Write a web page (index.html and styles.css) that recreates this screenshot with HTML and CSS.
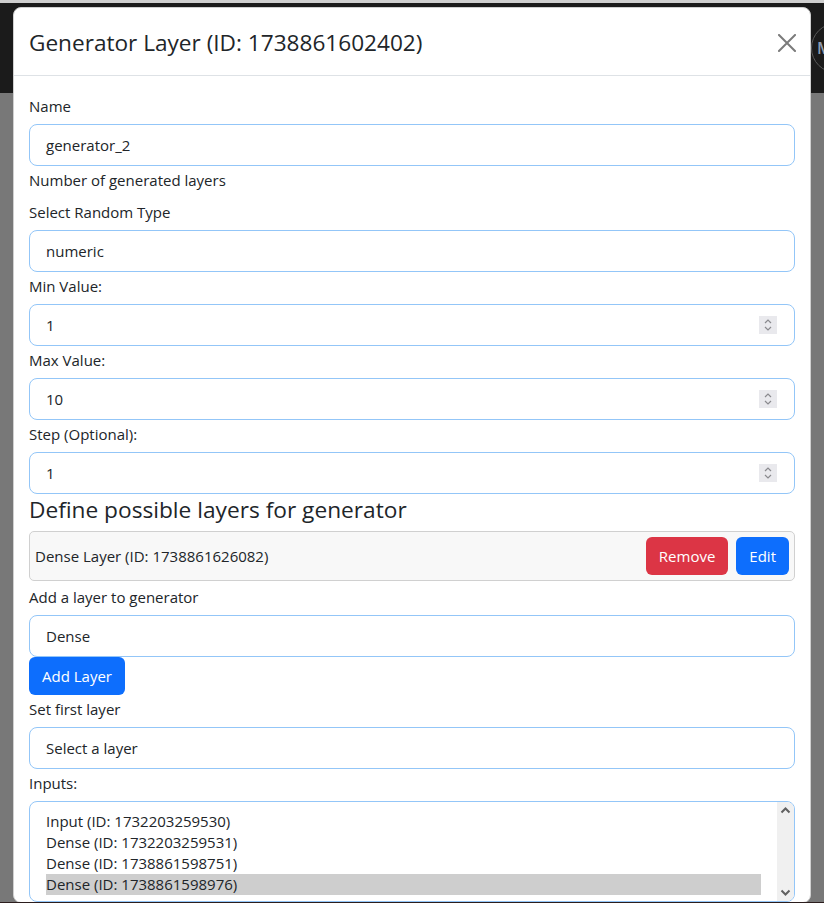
FILE: index.html
```html
<!DOCTYPE html>
<html lang="en">
<head>
<meta charset="utf-8">
<title>Generator Layer</title>
<link rel="stylesheet" href="styles.css">
</head>
<body>
<div class="page">
  <div class="top-strip"></div>
  <nav class="navbar">
    <div class="avatar">M</div>
  </nav>
</div>

<div class="modal">
  <div class="modal-header">
    <h4 class="modal-title">Generator Layer (ID: 1738861602402)</h4>
    <svg class="close" width="18" height="18" viewBox="0 0 18 18" aria-label="Close">
      <path d="M1 1 L17 17 M17 1 L1 17" stroke="#7b7b7b" stroke-width="2" fill="none" stroke-linecap="square"/>
    </svg>
  </div>
  <div class="modal-body">
    <div class="label first">Name</div>
    <div class="field">generator_2</div>

    <div class="label spaced">Number of generated layers</div>
    <div class="label">Select Random Type</div>
    <div class="field">numeric</div>

    <div class="label">Min Value:</div>
    <div class="field number"><span>1</span><span class="spin"><svg width="10" height="14" viewBox="0 0 10 14"><path d="M2 5 L5 2 L8 5 M2 9 L5 12 L8 9" stroke="#8a8a8e" stroke-width="1.2" fill="none"/></svg></span></div>

    <div class="label">Max Value:</div>
    <div class="field number"><span>10</span><span class="spin"><svg width="10" height="14" viewBox="0 0 10 14"><path d="M2 5 L5 2 L8 5 M2 9 L5 12 L8 9" stroke="#8a8a8e" stroke-width="1.2" fill="none"/></svg></span></div>

    <div class="label">Step (Optional):</div>
    <div class="field number"><span>1</span><span class="spin"><svg width="10" height="14" viewBox="0 0 10 14"><path d="M2 5 L5 2 L8 5 M2 9 L5 12 L8 9" stroke="#8a8a8e" stroke-width="1.2" fill="none"/></svg></span></div>

    <h4 class="section-title">Define possible layers for generator</h4>
    <div class="layer-item">
      <span class="layer-name">Dense Layer (ID: 1738861626082)</span>
      <div class="actions">
        <span class="btn btn-danger">Remove</span>
        <span class="btn btn-primary">Edit</span>
      </div>
    </div>

    <div class="label">Add a layer to generator</div>
    <div class="field">Dense</div>
    <div><span class="btn btn-primary">Add Layer</span></div>

    <div class="label">Set first layer</div>
    <div class="field">Select a layer</div>

    <div class="label">Inputs:</div>
    <div class="listbox">
      <div class="options">
        <div class="option">Input (ID: 1732203259530)</div>
        <div class="option">Dense (ID: 1732203259531)</div>
        <div class="option">Dense (ID: 1738861598751)</div>
        <div class="option selected">Dense (ID: 1738861598976)</div>
      </div>
      <div class="scrollbar">
        <svg width="17" height="17" viewBox="0 0 17 17"><path d="M4.5 10.5 L8.5 6.5 L12.5 10.5" stroke="#606060" stroke-width="2" fill="none"/></svg>
        <svg class="down" width="17" height="17" viewBox="0 0 17 17"><path d="M4.5 6.5 L8.5 10.5 L12.5 6.5" stroke="#606060" stroke-width="2" fill="none"/></svg>
      </div>
    </div>
  </div>
</div>

<div class="bottom-edge"></div>
</body>
</html>
```

FILE: styles.css
```css
* { box-sizing: border-box; }

html, body {
  margin: 0;
  height: 903px;
  overflow: hidden;
}

body {
  background: #787878;
  font-family: "Open Sans", "Liberation Sans", sans-serif;
  font-size: 15px;
  line-height: 24px;
  color: #212529;
  position: relative;
}

.top-strip {
  height: 3px;
  background: #cfcfcf;
}

.navbar {
  height: 90px;
  background: #1b1b1b;
  display: flex;
  align-items: center;
  justify-content: flex-end;
}

.avatar {
  width: 50px;
  height: 50px;
  border: 1.5px solid #5a5a5a;
  border-radius: 50%;
  margin-right: -37px;
  display: flex;
  align-items: center;
  padding-left: 5px;
  color: #8d9bb0;
  font-size: 16px;
  font-weight: 600;
}

.modal {
  position: absolute;
  left: 13px;
  top: 7px;
  width: 798px;
  background: #fff;
  border: 1px solid #d0d0d0;
  border-radius: 8px;
}

.modal-header {
  height: 68px;
  display: flex;
  align-items: center;
  justify-content: space-between;
  padding: 3px 14px 0 15px;
  border-bottom: 1px solid #dee2e6;
}

.modal-title {
  margin: 0;
  font-size: 22.6px;
  font-weight: 400;
  line-height: 28px;
  color: #212529;
}

.close { display: block; }

.modal-body {
  padding: 16px 15px 0 15px;
}

.label {
  margin: 2px 0 6px;
  line-height: 24px;
}

.label.spaced {
  margin-bottom: 8px;
}

.field {
  height: 42px;
  border: 1px solid #93c6f8;
  border-radius: 8px;
  padding: 8px 16px;
  line-height: 24px;
  display: flex;
  align-items: center;
  justify-content: space-between;
}

.field.number {
  padding-right: 17px;
}

.spin {
  width: 18px;
  height: 18px;
  background: #e9e9ed;
  display: flex;
  align-items: center;
  justify-content: center;
}

.section-title {
  margin: 2px 0 7px;
  font-size: 22.7px;
  font-weight: 400;
  line-height: 28px;
}

.layer-item {
  height: 50px;
  background: #f8f8f8;
  border: 1px solid #d0d0d0;
  border-radius: 5px;
  padding: 5px;
  margin-bottom: 4px;
  display: flex;
  align-items: center;
  justify-content: space-between;
}

.actions {
  display: flex;
  gap: 8px;
}

.btn {
  display: inline-block;
  height: 38px;
  padding: 7px 13px;
  line-height: 24px;
  border-radius: 6px;
  color: #fff;
  font-size: 15px;
}

.btn-danger { background: #dc3545; }
.btn-primary { background: #0d6efd; }

.listbox {
  height: 101px;
  border: 1px solid #93c6f8;
  border-radius: 8px;
  display: flex;
  overflow: hidden;
}

.options {
  flex: 1;
  padding: 9px 16px 0 16px;
}

.option {
  height: 21px;
  line-height: 21px;
  white-space: nowrap;
}

.option.selected {
  background: #cecece;
}

.scrollbar {
  width: 17px;
  height: 99px;
  background: #f0f0f0;
  display: flex;
  flex-direction: column;
  justify-content: space-between;
}

.scrollbar svg { display: block; }

.bottom-edge {
  position: fixed;
  left: 0;
  right: 0;
  bottom: 0;
  height: 1px;
  background: #2b1d1d;
}
```
